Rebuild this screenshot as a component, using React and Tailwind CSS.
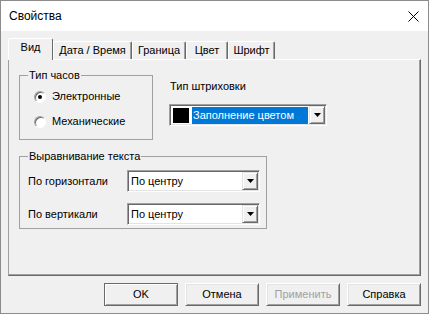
import React from "react";

const Triangle = () => (
  <svg width="7" height="4" viewBox="0 0 7 4">
    <polygon points="0,0 7,0 3.5,4" fill="#000" />
  </svg>
);

const DropButton = () => (
  <div className="w-[16px] shrink-0 flex items-center justify-center bg-[#f0f0f0] border border-t-[#e3e3e3] border-l-[#e3e3e3] border-r-[#696969] border-b-[#696969] shadow-[inset_1px_1px_0_#ffffff,inset_-1px_-1px_0_#a0a0a0]">
    <Triangle />
  </div>
);

const Combo = ({ width, children }) => (
  <div
    className={`${width} h-[22px] flex bg-white border border-t-[#a0a0a0] border-l-[#a0a0a0] border-r-white border-b-white shadow-[inset_1px_1px_0_#696969,inset_-1px_-1px_0_#e3e3e3] p-[1px]`}
  >
    <div className="flex-1 flex items-center min-w-0">{children}</div>
    <DropButton />
  </div>
);

const Radio = ({ checked, label }) => (
  <div className="h-[25px] flex items-center gap-[6px] pl-[6px]">
    <div className="w-[12px] h-[12px] rounded-full bg-white border border-t-[#a0a0a0] border-l-[#a0a0a0] border-r-white border-b-white shadow-[inset_1px_1px_0_#696969] flex items-center justify-center">
      {checked && <div className="w-[4px] h-[4px] rounded-full bg-black" />}
    </div>
    <span>{label}</span>
  </div>
);

const tabs = [
  { label: "Дата / Время", w: "w-[79px]" },
  { label: "Граница", w: "w-[54px]" },
  { label: "Цвет", w: "w-[42px]" },
  { label: "Шрифт", w: "w-[47px]" },
];

const Button = ({ children, primary, disabled }) => (
  <div
    className={
      primary
        ? "w-[74px] h-[23px] flex items-center justify-center border border-[#6a6a6a] shadow-[inset_1px_1px_0_#ffffff,inset_-1px_-1px_0_#a0a0a0]"
        : "w-[74px] h-[23px] flex items-center justify-center border border-t-white border-l-white border-r-[#696969] border-b-[#696969] shadow-[inset_1px_1px_0_#e3e3e3,inset_-1px_-1px_0_#a0a0a0]"
    }
  >
    <span className={disabled ? "text-[#a0a0a0]" : "text-black"}>{children}</span>
  </div>
);

export default function App() {
  return (
    <div className="w-[429px] h-[314px] flex flex-col border border-[#8c8c8c] bg-[#f0f0f0] text-[11px] leading-[13px] text-black font-['Liberation_Sans',Arial,sans-serif] overflow-hidden">
      {/* title bar */}
      <div className="h-[30px] shrink-0 bg-white flex items-center justify-between pl-[8px] pr-[9px]">
        <span className="text-[12px] leading-[16px]">Свойства</span>
        <svg width="11" height="11" viewBox="0 0 11 11">
          <path d="M0.5 0.5 L10.5 10.5 M10.5 0.5 L0.5 10.5" stroke="#000" strokeWidth="1" />
        </svg>
      </div>

      <div className="flex flex-col px-[7px] pt-[7px]">
        {/* tabs */}
        <div className="h-[21px] flex items-end">
          <div className="w-[45px] h-[22px] -mb-px relative z-10 bg-[#f0f0f0] border-l border-t border-r border-l-white border-t-white border-r-[#696969] rounded-t-[2px] flex justify-center pt-[2px]">
            Вид
          </div>
          {tabs.map((t) => (
            <div
              key={t.label}
              className={`${t.w} h-[18px] border-l border-t border-r border-l-white border-t-white border-r-[#696969] shadow-[inset_-1px_0_0_#a0a0a0] rounded-t-[2px] flex justify-center pt-[2px]`}
            >
              {t.label}
            </div>
          ))}
        </div>

        {/* panel */}
        <div className="h-[217px] flex flex-col border border-t-white border-l-[#a0a0a0] border-r-[#696969] border-b-[#696969] shadow-[inset_-1px_-1px_0_#a0a0a0] pl-[10px] pt-[9px]">
          <div className="flex">
            <fieldset className="w-[134px] border border-[#a0a0a0] pl-[8px] pb-[5px]">
              <legend className="px-[1px]">Тип часов</legend>
              <div className="mt-[2px]">
                <Radio checked label="Электронные" />
                <Radio label="Механические" />
              </div>
            </fieldset>

            <div className="ml-[16px] flex flex-col">
              <div className="mt-[11px] pl-[1px]">Тип штриховки</div>
              <div className="mt-[11px]">
                <Combo width="w-[158px]">
                  <div className="w-[16px] h-[15px] bg-black ml-[2px]" />
                  <div className="flex-1 h-[17px] ml-[3px] mr-[1px] bg-[#0078d7] text-white flex items-center pl-[1px]">
                    Заполнение цветом
                  </div>
                </Combo>
              </div>
            </div>
          </div>

          <fieldset className="w-[248px] mt-[10px] border border-[#a0a0a0] pl-[8px] pb-[3px]">
            <legend className="px-[1px]">Выравнивание текста</legend>
            <div className="mt-[7px] flex flex-col gap-[11px]">
              <div className="flex items-center">
                <span className="w-[99px]">По горизонтали</span>
                <Combo width="w-[133px]">
                  <span className="pl-[2px]">По центру</span>
                </Combo>
              </div>
              <div className="flex items-center">
                <span className="w-[99px]">По вертикали</span>
                <Combo width="w-[133px]">
                  <span className="pl-[2px]">По центру</span>
                </Combo>
              </div>
            </div>
          </fieldset>
        </div>

        {/* buttons */}
        <div className="mt-[7px] flex justify-end gap-[7px]">
          <Button primary>OK</Button>
          <Button>Отмена</Button>
          <Button disabled>Применить</Button>
          <Button>Справка</Button>
        </div>
      </div>
    </div>
  );
}
